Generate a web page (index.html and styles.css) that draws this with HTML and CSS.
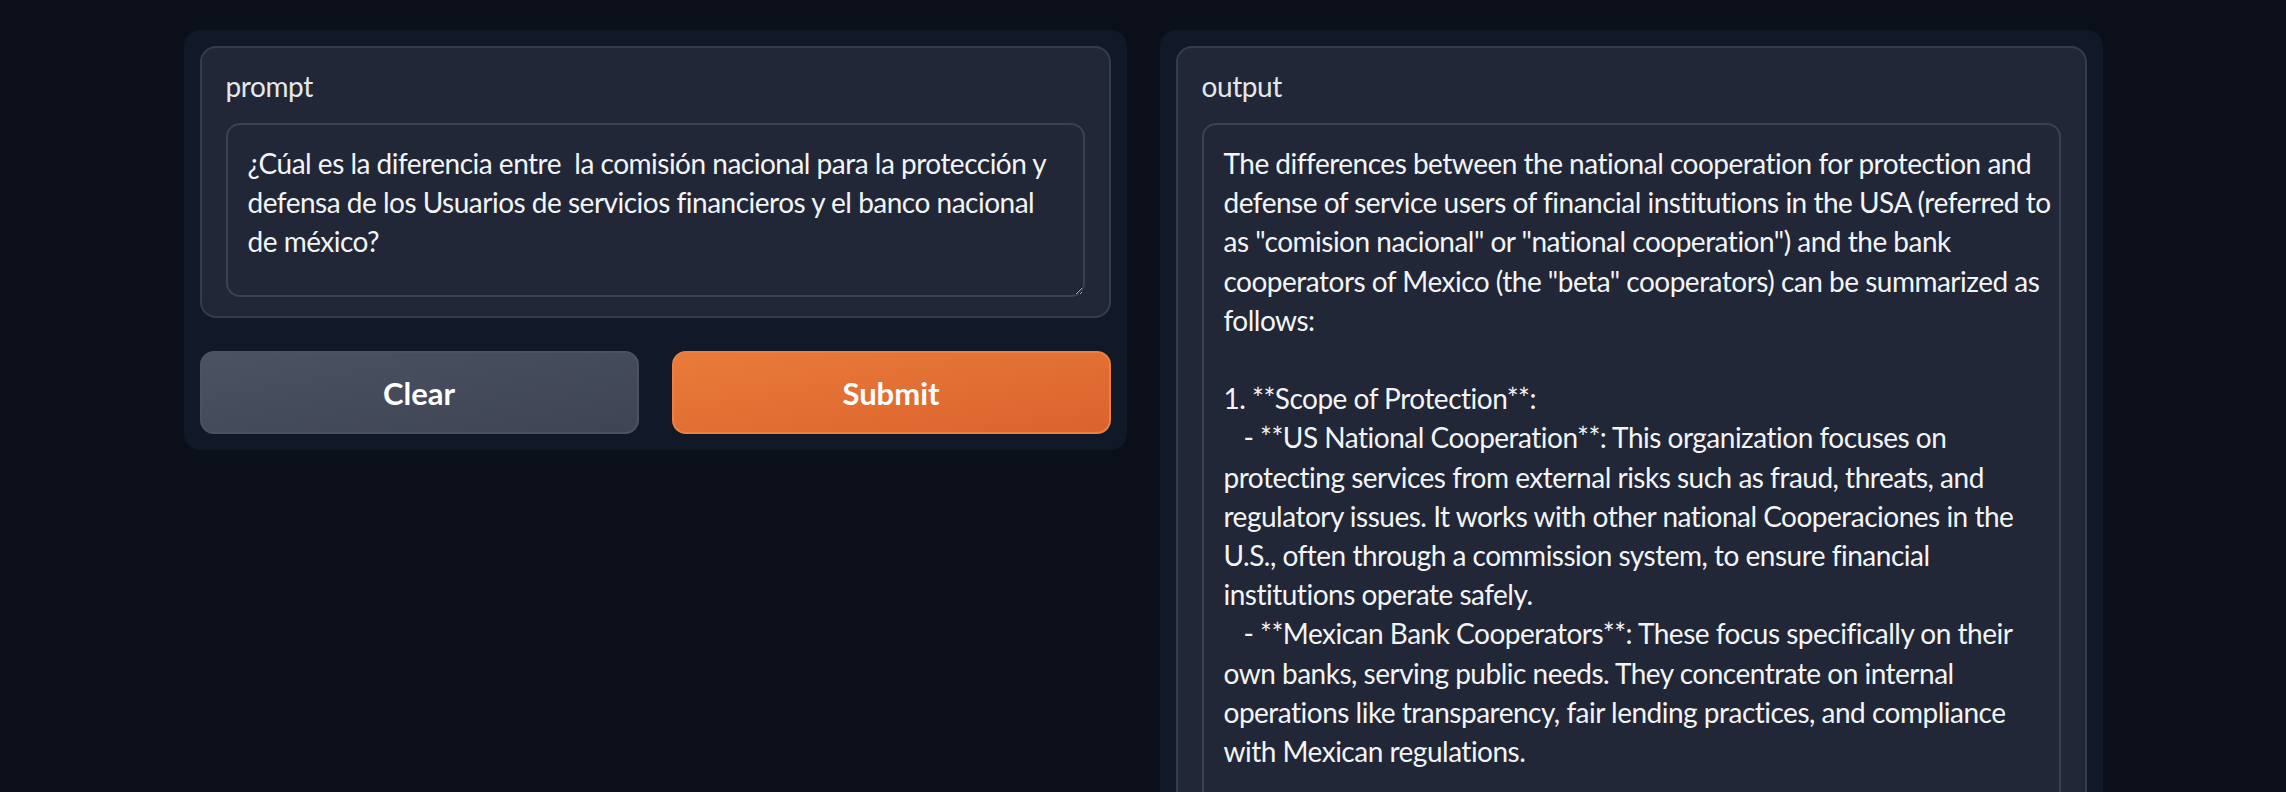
FILE: index.html
```html
<!DOCTYPE html>
<html lang="es">
<head>
<meta charset="utf-8">
<title>Interface</title>
<link rel="stylesheet" href="styles.css">
</head>
<body>
<main class="app">
  <section class="panel">
    <div class="block">
      <label class="label" for="prompt">prompt</label>
      <textarea id="prompt" class="input prompt" wrap="off">¿Cúal es la diferencia entre  la comisión nacional para la protección y
defensa de los Usuarios de servicios financieros y el banco nacional
de méxico?</textarea>
    </div>
    <div class="btn-row">
      <button class="btn secondary" type="button">Clear</button>
      <button class="btn primary" type="button">Submit</button>
    </div>
  </section>
  <section class="panel">
    <div class="block block-tall">
      <div class="label">output</div>
      <div class="input output">The differences between the national cooperation for protection and
defense of service users of financial institutions in the USA (referred to
as "comision nacional" or "national cooperation") and the bank
cooperators of Mexico (the "beta" cooperators) can be summarized as
follows:

1. **Scope of Protection**:
   - **US National Cooperation**: This organization focuses on
protecting services from external risks such as fraud, threats, and
regulatory issues. It works with other national Cooperaciones in the
U.S., often through a commission system, to ensure financial
institutions operate safely.
   - **Mexican Bank Cooperators**: These focus specifically on their
own banks, serving public needs. They concentrate on internal
operations like transparency, fair lending practices, and compliance
with Mexican regulations.
</div>
    </div>
  </section>
</main>
</body>
</html>
```

FILE: styles.css
```css
html, body {
  margin: 0;
  padding: 0;
  height: 792px;
  overflow: hidden;
  background: #0b0f19;
}

body {
  font-family: Lato, "Liberation Sans", sans-serif;
  color: #f3f4f6;
}

.app {
  display: grid;
  grid-template-columns: 943px 943px;
  column-gap: 33px;
  justify-content: center;
  align-items: start;
  padding-top: 30px;
}

.panel {
  background: #111827;
  border-radius: 16px;
  padding: 16px;
  display: flex;
  flex-direction: column;
  gap: 33px;
}

.block {
  background: #212736;
  border: 2px solid #353c4b;
  border-radius: 16px;
  padding: 19px 24px 19px;
  display: flex;
  flex-direction: column;
}

.label {
  display: block;
  font-size: 28px;
  line-height: 39px;
  color: #e5e7eb;
  margin-bottom: 17px;
  letter-spacing: -0.4px;
}

.input {
  box-sizing: border-box;
  width: 100%;
  margin: 0;
  background: #212736;
  border: 2px solid #3a4151;
  border-radius: 14px;
  padding: 19px 20px;
  font-family: Lato, "Liberation Sans", sans-serif;
  font-size: 28px;
  line-height: 39.2px;
  color: #f3f4f6;
  letter-spacing: -0.5px;
  white-space: pre;
}

.prompt {
  display: block;
  height: 174px;
  overflow: hidden;
  outline: none;
  resize: vertical;
}

.output {
  min-height: 760px;
}

.btn-row {
  display: grid;
  grid-template-columns: 1fr 1fr;
  column-gap: 33px;
}

.btn {
  height: 83px;
  border-radius: 14px;
  font-family: Lato, "Liberation Sans", sans-serif;
  font-size: 31px;
  font-weight: 700;
  color: #ffffff;
  display: flex;
  align-items: center;
  justify-content: center;
  padding: 0;
  cursor: pointer;
}

.secondary {
  background: linear-gradient(to bottom right, #4b5262, #3e4452);
  border: 2px solid #4b5261;
}

.primary {
  background: linear-gradient(to bottom right, #e97b39, #db632e);
  border: 2px solid #ec8042;
}
```
